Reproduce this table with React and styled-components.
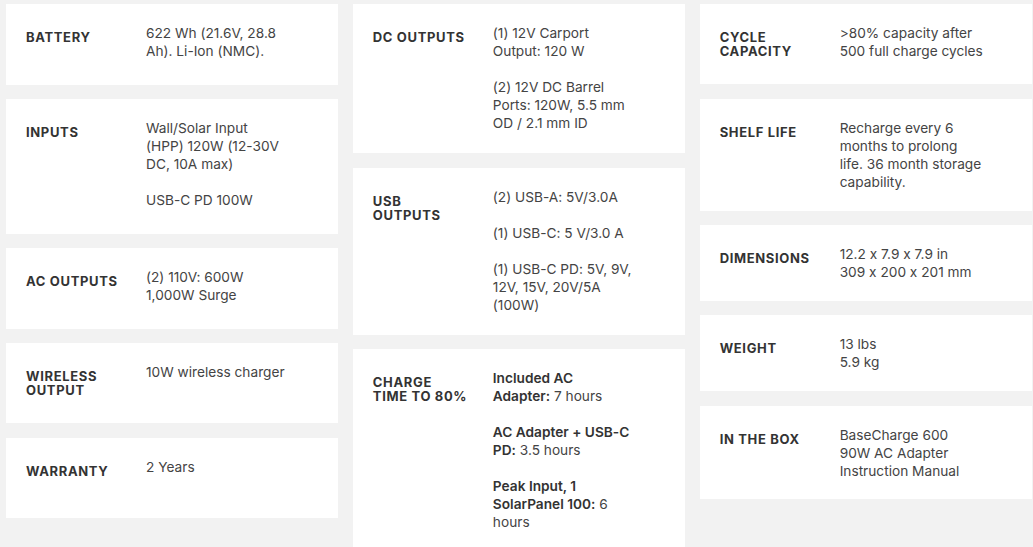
import React from "react";
import styled, { createGlobalStyle } from "styled-components";

const GlobalStyle = createGlobalStyle`
  body {
    margin: 0;
    background: #f2f2f2;
    font-family: Inter, "Liberation Sans", Arial, sans-serif;
    font-feature-settings: "calt" 0;
  }
`;

const columns = [
  {
    pb: 24.5,
    labelGap: 0,
    minH: 80,
    specs: [
      { label: "Battery", value: [["622 Wh (21.6V, 28.8", "Ah). Li-Ion (NMC)."]] },
      {
        label: "Inputs",
        value: [["Wall/Solar Input", "(HPP) 120W (12-30V", "DC, 10A max)"], ["USB-C PD 100W"]],
      },
      { label: "AC Outputs", value: [["(2) 110V: 600W", "1,000W Surge"]] },
      { label: "Wireless Output", value: [["10W wireless charger"]] },
      { label: "Warranty", value: [["2 Years"]] },
    ],
  },
  {
    pb: 21,
    labelGap: 6,
    specs: [
      {
        label: "DC Outputs",
        value: [
          ["(1) 12V Carport", "Output: 120 W"],
          ["(2) 12V DC Barrel", "Ports: 120W, 5.5 mm", "OD / 2.1 mm ID"],
        ],
      },
      {
        label: "USB Outputs",
        value: [
          ["(2) USB-A: 5V/3.0A"],
          ["(1) USB-C: 5 V/3.0 A"],
          ["(1) USB-C PD: 5V, 9V,", "12V, 15V, 20V/5A", "(100W)"],
        ],
      },
      {
        label: "Charge Time to 80%",
        value: [
          [<><b>Included AC</b></>, <><b>Adapter:</b> 7 hours</>],
          [<><b>AC Adapter + USB-C</b></>, <><b>PD:</b> 3.5 hours</>],
          [<><b>Peak Input, 1</b></>, <><b>SolarPanel 100:</b> 6</>, "hours"],
        ],
      },
    ],
  },
  {
    pb: 19.8,
    labelGap: 6.5,
    specs: [
      { label: "Cycle Capacity", value: [[">80% capacity after", "500 full charge cycles"]] },
      {
        label: "Shelf Life",
        value: [["Recharge every 6", "months to prolong", "life. 36 month storage", "capability."]],
      },
      { label: "Dimensions", value: [["12.2 x 7.9 x 7.9 in", "309 x 200 x 201 mm"]] },
      { label: "Weight", value: [["13 lbs", "5.9 kg"]] },
      { label: "In the Box", value: [["BaseCharge 600", "90W AC Adapter", "Instruction Manual"]] },
    ],
  },
];

const App = () => {
  return (
    <>
      <GlobalStyle />
      <Page>
        {columns.map((col, ci) => (
          <Column key={ci}>
            {col.specs.map((spec) => (
              <Card key={spec.label} $pb={col.pb} $minH={col.minH}>
                <Label $mb={col.labelGap}>{spec.label}</Label>
                <Value>
                  {spec.value.map((para, pi) => (
                    <Para key={pi}>
                      {para.map((line, li) => (
                        <React.Fragment key={li}>
                          {li > 0 && <br />}
                          {line}
                        </React.Fragment>
                      ))}
                    </Para>
                  ))}
                </Value>
              </Card>
            ))}
          </Column>
        ))}
      </Page>
    </>
  );
};

const Page = styled.div`
  display: grid;
  grid-template-columns: repeat(3, 1fr);
  column-gap: 14.5px;
  padding: 4px 1px 0 6px;
  align-items: start;
  height: 543px;
  overflow: hidden;
`;

const Column = styled.div`
  display: flex;
  flex-direction: column;
  gap: 14.5px;
`;

const Card = styled.div`
  background: #fff;
  display: flex;
  align-items: flex-start;
  gap: 20px;
  padding: 20px 20px ${(p) => p.$pb}px;
  min-height: ${(p) => p.$minH || 0}px;
  box-sizing: border-box;
`;

const Label = styled.div`
  width: 96px;
  flex-shrink: 0;
  margin: 6px 4px ${(p) => p.$mb}px 0;
  font-size: 13px;
  line-height: 14px;
  font-weight: 700;
  text-transform: uppercase;
  letter-spacing: 0.65px;
  color: #333;
`;

const Value = styled.div`
  flex: 1;
  font-size: 13.7px;
  line-height: 18px;
  color: #444;

  b {
    font-weight: 600;
    color: #333;
  }
`;

const Para = styled.p`
  margin: 0 0 18px;

  &:last-child {
    margin-bottom: 0;
  }
`;

export default App;
